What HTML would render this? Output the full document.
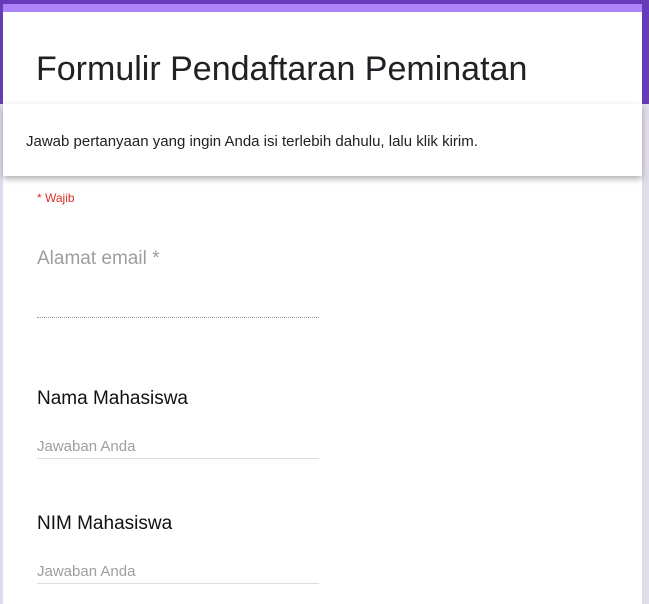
<!DOCTYPE html>
<html><head><style>
body{margin:0;width:649px;height:587px;overflow:hidden;background:#e1dcec;font-family:"Liberation Sans",sans-serif;position:relative}
.bgtop{position:absolute;left:0;top:0;width:649px;height:104px;background:#673ab7}
.card{position:absolute;left:3px;top:4px;width:639px;height:600px;background:#fff}
.stripe{position:absolute;left:3px;top:4px;width:639px;height:8px;background:#ad84f7}
.t{position:absolute;white-space:nowrap}
.banner{position:absolute;left:3px;top:104px;width:639px;height:72px;background:#fff;box-shadow:0 3px 6px rgba(0,0,0,.3)}
.line{position:absolute;left:37px;width:282px;height:1px;background:#ddd}
</style></head><body>
<div class="bgtop"></div>
<div class="card"></div>
<div class="stripe"></div>
<div class="t" style="left:36px;top:50px;font-size:34px;color:#202124">Formulir Pendaftaran Peminatan</div>
<div class="banner"></div>
<div class="t" style="left:26px;top:133px;font-size:15px;color:#202124">Jawab pertanyaan yang ingin Anda isi terlebih dahulu, lalu klik kirim.</div>
<div class="t" style="left:37px;top:191px;font-size:12px;color:#d93025">* Wajib</div>
<div class="t" style="left:37px;top:248px;font-size:19px;color:#9e9e9e">Alamat email *</div>
<div style="position:absolute;left:37px;top:317px;width:282px;border-top:1px dotted #999"></div>
<div class="t" style="left:37px;top:388px;font-size:19px;color:#111">Nama Mahasiswa</div>
<div class="t" style="left:37px;top:438px;font-size:15px;color:#9e9e9e">Jawaban Anda</div>
<div class="line" style="top:458px"></div>
<div class="t" style="left:37px;top:513px;font-size:19px;color:#111">NIM Mahasiswa</div>
<div class="t" style="left:37px;top:563px;font-size:15px;color:#9e9e9e">Jawaban Anda</div>
<div class="line" style="top:583px"></div>
</body></html>
